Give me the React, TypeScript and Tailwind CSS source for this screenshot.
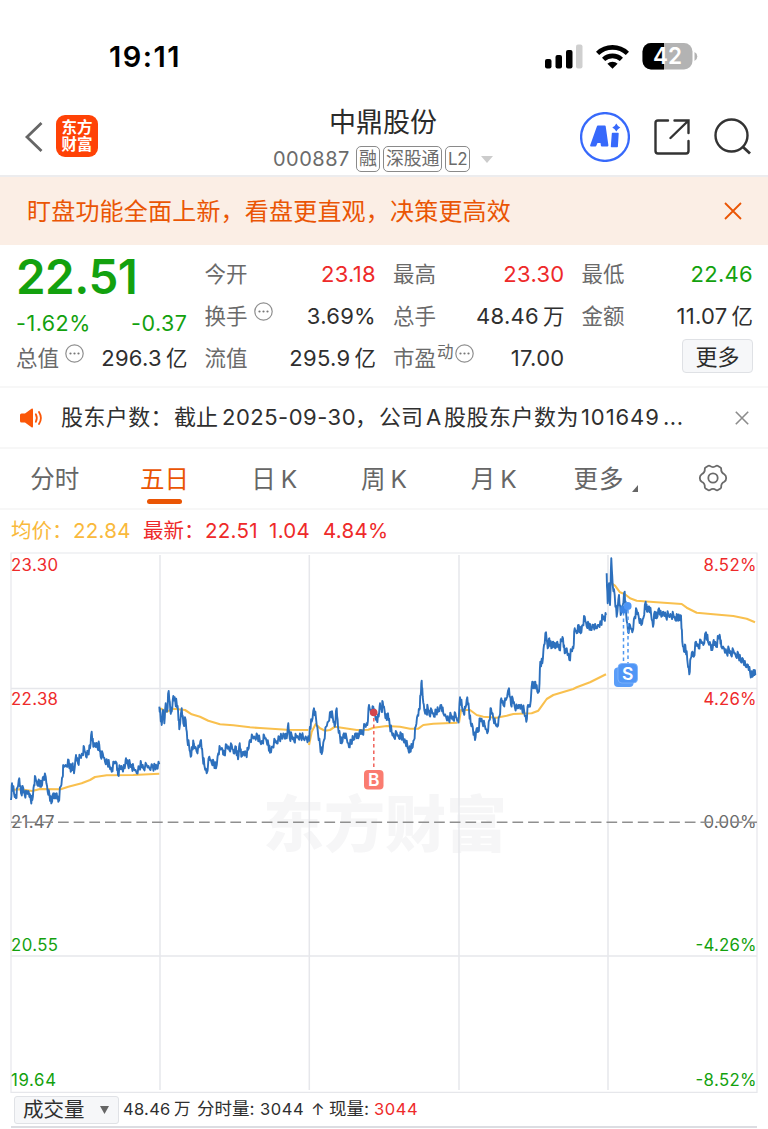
import type { ReactNode } from 'react';

type Point = [number, number];

interface Series {
  // origin of the sample block; samples are stored in 1/3 px steps
  origin: Point;
  points: string;
}

const PRICE: Series[] = [
  {
    origin: [0, 660],
    points:
      '33,420 36,370 42,400 48,415 52,385 58,355 63,400 70,385 74,405 80,400 86,395 92,418 97,420 102,375 106,350 112,375 118,362 124,380 130,350 137,350 143,395 148,400 154,430 160,400 166,415 170,400 175,425 182,380 188,350 190,315 200,320 206,300 212,335 218,310 222,340 228,285 234,310 240,290 248,285 252,260 258,290 264,275 270,265 275,215 280,260 285,250 292,260 298,255 302,290 308,280 315,305 322,305 328,315 335,335 342,305 350,310 354,345 360,320 366,325 374,325 378,295 384,315 390,310 396,325 400,320 410,340 418,320 424,312 430,325 440,315 448,325 458,318 465,325 470,318 478,313',
  },
  {
    origin: [0, 660],
    points:
      '478,140 481,160 485,195 489,150 493,190 497,130 501,155 506,93 511,150 515,155 520,108 526,125 530,130 534,150 538,208 545,145 550,190 557,180 562,240 567,255 572,290 577,260 581,250 590,275 597,262 603,240 608,290 613,315 620,340 628,290 635,310 641,305 648,325 655,280 660,262 668,270 672,285 680,255 688,270 695,255 701,280 708,260 714,298 719,250 724,290 730,275 738,285 744,270 750,240 758,230 765,235 772,225 780,245 788,250 792,225 800,245 805,250 810,278 818,260 825,240 830,250 838,230 845,235 852,222 860,235 865,190 869,235 875,225 883,245 888,225 895,235 902,225 910,235 920,235 927,240',
  },
  {
    origin: [250, 660],
    points:
      '177,245 180,200 185,185 192,145 198,175 204,220 210,255 215,282 222,240 228,200 235,185 242,155 248,170 254,200 260,145 264,200 270,230 275,250 282,220 290,235 297,262 303,240 310,240 318,220 325,235 330,210 337,222 345,195 352,195 357,135 363,160 370,140 376,170 380,180 386,170 390,130 395,155 398,125 404,155 410,180 414,160 419,195 425,215 432,232 440,218 447,235 453,220 460,240 466,245 472,255 476,275 480,262 486,265 492,240 497,200 503,165 508,150 512,105 515,62 518,110 523,150 530,160 533,140 538,165 545,150 552,170 558,150 565,155 574,135 580,160 588,170 596,180 603,165 610,180 616,160 622,185',
  },
  {
    origin: [250, 660],
    points:
      '625,190 630,112 636,140 641,160 646,145 652,112 657,150 662,190 668,200 675,240 680,205 685,215 690,175 697,185 704,195 712,220 718,180 723,145 730,175 736,190 742,200 748,170 754,115 760,135 768,120 777,85 783,135 788,115 794,140 802,145 808,135 816,145 822,150 829,185 834,135 840,140 847,65 852,85 856,65 862,95 867,95 871,5 877,10 882,-45 888,-83 893,-35 898,-65 904,-35 910,-55 916,-35 922,-55 928,-30 934,-60 939,-65 944,-20 950,-35 958,0 964,-30 970,-35 974,-95 980,-80 986,-105 992,-80 998,-105 1004,-130 1010,-100 1016,-110 1022,-90 1030,-105 1038,-95 1046,-105 1053,-110 1058,-130 1063,-123 1068,-135',
  },
  {
    origin: [500, 545],
    points:
      '320,85 323,175 327,115 330,180 334,40 338,120 344,150 350,215 357,150 362,210 368,180 374,140 378,200 384,262 390,240 397,262 404,215 410,195 416,215 424,240 430,220 437,170 441,200 448,185 453,205 459,245 464,200 470,220 477,190 484,215 490,200 498,215 505,208 514,215 520,208 526,225 532,210 538,225 543,212 547,290 552,320 556,300 562,345 568,388 572,340 577,320 581,335 588,290 596,310 602,285 610,300 618,262 624,290 632,300 637,315 641,285 648,305 656,275 660,275 664,305 672,310 680,325 687,312 693,330 700,315 708,335 715,325 722,350 729,342 737,365 744,360 750,380 757,395 762,375 766,390',
  },
];

const AVERAGE: Series[] = [
  {
    origin: [0, 660],
    points:
      '33,390 60,388 97,393 120,387 182,388 205,380 245,370 270,360 285,351 320,346 400,345 478,341',
  },
  {
    origin: [0, 660],
    points:
      '480,145 500,155 520,146 555,150 575,163 600,170 625,182 660,193 700,196 750,202 780,204 860,209 925,210',
  },
  {
    origin: [250, 660],
    points:
      '177,255 185,215 197,192 210,205 225,212 240,210 255,200 275,203 320,210 355,209 370,203 410,198 450,200 480,206 505,206 520,195 550,191 622,188',
  },
  {
    origin: [250, 660],
    points:
      '627,188 633,150 660,150 680,165 700,170 740,173 770,167 790,162 845,160 865,152 870,145 890,117 910,105 970,87 980,82 1020,67 1068,43',
  },
  {
    origin: [500, 545],
    points:
      '330,112 345,122 360,142 375,148 390,160 410,167 470,172 545,177 560,188 590,203 640,208 700,213 740,221 765,232',
  },
];

function parse({ origin, points }: Series): Point[] {
  return points.split(' ').map((p) => {
    const [x, y] = p.split(',').map(Number);
    return [origin[0] + x / 3, origin[1] + y / 3];
  });
}

function smoothPath(series: Series) {
  return parse(series)
    .map(([x, y], i) => `${i ? 'L' : 'M'}${x.toFixed(1)} ${y.toFixed(1)}`)
    .join('');
}

function tickPath(series: Series) {
  const pts = parse(series);
  let d = `M${pts[0][0]} ${pts[0][1]}`;
  for (let i = 1; i < pts.length; i++) {
    const [x0, y0] = pts[i - 1];
    const [x1, y1] = pts[i];
    const wobble = 1.2 + ((i * 7) % 5) * 0.7;
    d += `L${(x0 + (x1 - x0) * 0.36).toFixed(1)} ${(y0 + (y1 - y0) * 0.36 + wobble).toFixed(1)}`;
    d += `L${(x0 + (x1 - x0) * 0.68).toFixed(1)} ${(y0 + (y1 - y0) * 0.68 - wobble).toFixed(1)}`;
    d += `L${x1.toFixed(1)} ${y1.toFixed(1)}`;
  }
  return d;
}

function StatusBar() {
  return (
    <div className="flex h-[100px] items-start pt-[41px]">
      <div className="ml-[109px] w-[436px] text-[29px] leading-8 font-semibold tracking-[1.5px] text-black">
        19:11
      </div>
      <svg width="40" height="26" viewBox="0 0 40 26" className="mt-[3px]">
        <rect x="0" y="15" width="6.5" height="9.5" rx="2" />
        <rect x="10.5" y="11" width="6.5" height="13.5" rx="2" />
        <rect x="21" y="6" width="6.5" height="18.5" rx="2" />
        <rect x="31" y="0.5" width="6.5" height="24" rx="2" fill="#cfcfcf" />
      </svg>
      <svg width="35" height="26" viewBox="0 0 35 26" className="mt-[3px] ml-[10px]">
        <g fill="none" stroke="#000" strokeWidth="4.6">
          <path d="M2.6 9.4a21.5 21.5 0 0 1 29.8 0" />
          <path d="M8.6 15.4a13 13 0 0 1 17.8 0" />
        </g>
        <path d="M17.5 24.8l-5.1-5.1a7.4 7.4 0 0 1 10.2 0z" />
      </svg>
      <svg width="56" height="28" viewBox="0 0 56 28" className="mt-[1px] ml-[12px]">
        <defs>
          <clipPath id="battery">
            <rect x="0.5" y="1" width="50" height="26.5" rx="8.5" />
          </clipPath>
        </defs>
        <g clipPath="url(#battery)">
          <rect width="51" height="28" fill="#b3b3b3" />
          <rect width="22" height="28" fill="#000" />
        </g>
        <path d="M52.5 10a5 5 0 0 1 0 9z" fill="#b3b3b3" />
        <text x="11" y="22.3" fontSize="22.5" fontWeight="600" fill="#fff" textLength="29" className="font-[Inter]">
          42
        </text>
      </svg>
    </div>
  );
}

function Tag({ children }: { children: ReactNode }) {
  return (
    <span className="flex h-[26px] shrink-0 items-center rounded-[5px] border-[1.5px] border-[#8a8a8a] px-[2px] text-[18px] leading-none whitespace-nowrap">
      {children}
    </span>
  );
}

function Header() {
  return (
    <div className="flex h-[77px] items-start border-b-2 border-[#ececee]">
      <svg width="20" height="32" viewBox="0 0 20 32" className="mt-[21px] ml-[24px]">
        <path d="M17.5 2L3 16l14.500 14" fill="none" stroke="#666" strokeWidth="2.8" />
      </svg>
      <div className="mt-[15px] ml-[12px] flex h-[42px] w-[42px] flex-col items-center justify-center rounded-[9px] bg-[#ff4206] text-[15.5px] leading-[17.500px] font-bold text-white">
        <span>东方</span>
        <span>财富</span>
      </div>
      <div className="ml-[175px] w-[219px]">
        <div className="mt-[6px] pl-[56px] text-[27px] leading-[34px] text-[#2b2b2b]">中鼎股份</div>
        <div className="mt-[6px] flex items-center gap-[3px] text-[#6b6b6b]">
          <span className="w-[80px] shrink-0 text-[20px] leading-[26px] tracking-[0.5px]">000887</span>
          <Tag>融</Tag>
          <Tag>
            <span className="tracking-[-0.3px]">深股通</span>
          </Tag>
          <Tag>
            <span className="text-[17px] tracking-[-0.5px]">L2</span>
          </Tag>
          <svg width="12" height="7" viewBox="0 0 12 7" className="ml-[8px] shrink-0">
            <path d="M0 0h12L6 7z" fill="#ccc" />
          </svg>
        </div>
      </div>
      <svg width="50" height="50" viewBox="0 0 50 50" className="mt-[12px] ml-[88px]">
        <circle cx="25" cy="25" r="23.9" fill="none" stroke="#3769fb" strokeWidth="2.300" />
        <path
          d="M11 33.500L17.800 14.500H24.800L27.500 33.500H21.800L21.300 30H17L15.500 33.500z M18.700 25.800H20.800L20.300 21.300z"
          fill="#3769fb"
          fillRule="evenodd"
          stroke="#3769fb"
          strokeWidth="1.800"
          strokeLinejoin="round"
        />
        <path d="M32.500 21.500h5.500l-.8 13h-5.700z" fill="#3769fb" stroke="#3769fb" strokeWidth="1.400" strokeLinejoin="round" />
        <path d="M36.300 11.500q1.300 2.800 4 4-2.700 1.300-4 4-1.300-2.700-4-4 2.700-1.200 4-4z" fill="#3769fb" />
      </svg>
      <svg width="36" height="38" viewBox="0 0 36 38" className="mt-[18px] ml-[24px]">
        <g fill="none" stroke="#333" strokeWidth="2.400" strokeLinecap="round">
          <path d="M14 2.500H4Q1.500 2.500 1.500 5V33Q1.500 35.500 4 35.500H32Q34.500 35.500 34.500 33V23" />
          <path d="M20.500 2.500H34.500V15M34.500 2.500L16.500 20" />
        </g>
      </svg>
      <svg width="38" height="38" viewBox="0 0 38 38" className="mt-[18px] ml-[24px]">
        <circle cx="17.500" cy="17.500" r="16" fill="none" stroke="#333" strokeWidth="2.400" />
        <path d="M29 29l7 6.500" stroke="#333" strokeWidth="2.800" />
      </svg>
    </div>
  );
}

function Banner() {
  return (
    <div className="flex h-[68px] items-center justify-between bg-[#fbeee5] pr-[26px] pl-[27px]">
      <span className="pt-[2px] text-[24px] tracking-[0.2px] text-[#ea5504]">
        盯盘功能全面上新，看盘更直观，决策更高效
      </span>
      <svg width="18" height="18" viewBox="0 0 18 18">
        <path d="M1 1l16 16M17 1L1 17" stroke="#ea5504" strokeWidth="1.800" />
      </svg>
    </div>
  );
}

function MoreDots() {
  return (
    <svg width="19" height="19" viewBox="0 0 19 19" className="mb-[9px] shrink-0">
      <circle cx="9.500" cy="9.500" r="8.700" fill="none" stroke="#8f8f8f" strokeWidth="1.200" />
      <g fill="#777">
        <circle cx="5.500" cy="9.500" r="1.100" />
        <circle cx="9.500" cy="9.500" r="1.100" />
        <circle cx="13.500" cy="9.500" r="1.100" />
      </g>
    </svg>
  );
}

interface StatProps {
  label: string;
  value: string;
  unit?: string;
  sup?: string;
  info?: boolean;
  color?: string;
}

function Stat({ label, value, unit, sup, info, color = 'text-[#2f2f2f]' }: StatProps) {
  return (
    <div className="flex h-[42px] items-center justify-between">
      <div className="flex items-center text-[21.5px] text-[#6a6a6a]">
        {label}
        {sup && <span className="mb-[12px] ml-px text-[16.5px] leading-none">{sup}</span>}
        {info && <span className={sup ? 'ml-px' : 'ml-[6px]'}><MoreDots /></span>}
      </div>
      <div className={`flex items-center gap-[4px] text-[21.5px] ${color}`}>
        <span className="text-[22px] tracking-[0.3px]">{value}</span>
        {unit && <span>{unit}</span>}
      </div>
    </div>
  );
}

function Quote() {
  return (
    <div className="grid h-[143px] grid-cols-4 gap-x-[17px] border-b-2 border-[#f7f7f7] pt-[8px] pr-[15px] pl-[16px]">
      <div>
        <div className="h-[48px] text-[47.5px] leading-[48px] font-semibold tracking-[-0.5px] text-[#13a10e]">
          22.51
        </div>
        <div className="flex h-[36px] items-center justify-between pt-[8px] text-[21.5px] tracking-[0.5px] text-[#13a10e]">
          <span>-1.62%</span>
          <span>-0.37</span>
        </div>
        <Stat label="总值" value="296.3" unit="亿" info />
      </div>
      <div>
        <Stat label="今开" value="23.18" color="text-[#ee2a2a]" />
        <Stat label="换手" value="3.69%" info />
        <Stat label="流值" value="295.9" unit="亿" />
      </div>
      <div>
        <Stat label="最高" value="23.30" color="text-[#ee2a2a]" />
        <Stat label="总手" value="48.46" unit="万" />
        <Stat label="市盈" value="17.00" sup="动" info />
      </div>
      <div>
        <Stat label="最低" value="22.46" color="text-[#13a10e]" />
        <Stat label="金额" value="11.07" unit="亿" />
        <button className="mt-[2px] ml-auto flex h-[34px] w-[71px] items-center justify-center rounded-[4px] border border-[#dfe1e5] bg-[#f6f7f9] pt-px text-[22px] leading-none text-[#2b2b2b]">
          更多
        </button>
      </div>
    </div>
  );
}

function Notice() {
  return (
    <div className="flex h-[61px] items-center border-b-2 border-[#f7f7f7] text-[22px] text-[#2f2f2f]">
      <svg width="24" height="20" viewBox="0 0 24 20" className="ml-[19px]">
        <path d="M1 7q0-1.500 1.500-1.500H6L12.500.8Q14 0 14 1.800V18.200Q14 20 12.500 19.200L6 14.500H2.500Q1 14.500 1 13z" fill="#fb5708" />
        <g fill="none" stroke="#fb5708" strokeWidth="1.800" strokeLinecap="round">
          <path d="M16.800 6.200q2 3.800 0 7.600" />
          <path d="M20 4q3.800 6 0 12" />
        </g>
      </svg>
      <div className="ml-[18px] flex whitespace-nowrap">
        <span className="w-[113px] tracking-[0.400px]">股东户数：</span>
        <span className="w-[48px]">截止</span>
        <span className="w-[133px] tracking-[0.500px]">2025-09-30</span>
        <span className="w-[24px]">，</span>
        <span className="w-[47px]">公司</span>
        <span className="w-[18px]">A</span>
        <span className="w-[137px] tracking-[0.500px]">股股东户数为</span>
        <span className="w-[82px] tracking-[0.900px]">101649</span>
        <span className="tracking-[0.500px]">...</span>
      </div>
      <svg width="14" height="14" viewBox="0 0 14 14" className="mr-[19px] ml-auto">
        <path d="M.8.8l12.400 12.400M13.200.8L.8 13.200" stroke="#8c8c8c" strokeWidth="1.600" />
      </svg>
    </div>
  );
}

function Tabs() {
  const tabs = ['分时', '五日', '日 K', '周 K', '月 K'];
  return (
    <div className="grid h-[61px] grid-cols-7 border-b-2 border-[#f7f7f7] text-[24.5px] text-[#666]">
      {tabs.map((tab) => {
        const active = tab === '五日';
        return (
          <div
            key={tab}
            className={`flex flex-col items-center ${active ? 'text-[#ea5504]' : ''}`}
          >
            <span className="mt-[12px] leading-[36px] [word-spacing:-2px]">{tab}</span>
            {active && <span className="mt-[2px] h-[5px] w-[35px] rounded-full bg-[#ea5504]" />}
          </div>
        );
      })}
      <div className="flex justify-center pl-[5px]">
        <span className="mt-[12px] leading-[36px] tracking-[1px]">更多</span>
        <svg width="6" height="7" viewBox="0 0 6 7" className="mt-[36px] ml-[8px]">
          <path d="M6 0v7H0z" fill="#666" />
        </svg>
      </div>
      <div className="flex justify-center">
        <svg width="30" height="30" viewBox="0 0 30 30" className="mt-[14px]">
          <g fill="none" stroke="#6a6a6a" strokeWidth="1.800" strokeLinejoin="round">
            <path d="M10.500 2.800Q11.300 2.400 12 3.100Q15 5.100 18 3.100Q18.700 2.400 19.500 2.800L22.500 4.600Q23.400 5.100 23.200 6Q22.900 9.500 26.300 11.200Q28.200 12.500 28.200 15Q28.200 17.500 26.300 18.800Q22.900 20.500 23.200 24Q23.400 24.900 22.500 25.400L19.500 27.200Q18.700 27.600 18 26.900Q15 24.900 12 26.900Q11.300 27.600 10.500 27.200L7.500 25.400Q6.600 24.900 6.800 24Q7.100 20.500 3.700 18.800Q1.800 17.500 1.800 15Q1.800 12.500 3.700 11.200Q7.100 9.500 6.800 6Q6.600 5.100 7.500 4.600z" />
            <circle cx="15" cy="15" r="4.700" />
          </g>
        </svg>
      </div>
    </div>
  );
}

function Legend() {
  return (
    <div className="flex h-[42px] items-center pt-px pl-[11px] text-[20.5px] whitespace-nowrap text-[#ee2a2a]">
      <span className="w-[62px] text-[#f9b93c]">均价：</span>
      <span className="w-[70px] tracking-[0.300px] text-[#f9b93c]">22.84</span>
      <span className="w-[62px]">最新：</span>
      <span className="w-[64px] tracking-[0.300px]">22.51</span>
      <span className="w-[54px] tracking-[0.300px]">1.04</span>
      <span className="tracking-[0.300px]">4.84%</span>
    </div>
  );
}

const LABELS: { y: number; left: string; right: string; w: number; rw: number; fill: string }[] = [
  { y: 570.5, left: '23.30', right: '8.52%', w: 47, rw: 53, fill: '#ee2a2a' },
  { y: 704.5, left: '22.38', right: '4.26%', w: 47, rw: 53, fill: '#ee2a2a' },
  { y: 828, left: '21.47', right: '0.00%', w: 43.5, rw: 53, fill: '#6a6a6a' },
  { y: 951, left: '20.55', right: '-4.26%', w: 47, rw: 61, fill: '#13a10e' },
  { y: 1086, left: '19.64', right: '-8.52%', w: 45, rw: 61, fill: '#13a10e' },
];

function Chart() {
  return (
    <svg width="768" height="541" viewBox="0 552 768 541" className="block font-[Inter]">
      <text
        x="263"
        y="847"
        fontSize="61"
        fontWeight="900"
        fill="#f6f6f7"
        textLength="244"
        className="font-['Noto_Sans_CJK_SC']"
      >
        东方财富
      </text>
      <g stroke="#e6e7eb" strokeWidth="1.500" fill="none">
        <path d="M11 553H757V1092.300H11z" strokeWidth="1.200" />
        <path d="M11 688.500H757M11 956H757" />
        <path d="M160 555V1090M309.300 555V1090M459 555V1090M608 555V1090" />
      </g>

      {AVERAGE.map((s, i) => (
        <path key={i} d={smoothPath(s)} fill="none" stroke="#f9c04e" strokeWidth="2.100" strokeLinejoin="round" />
      ))}
      {PRICE.map((s, i) => (
        <path key={i} d={tickPath(s)} fill="none" stroke="#2d70bd" strokeWidth="1.900" strokeLinejoin="round" />
      ))}

      {/* buy marker */}
      <path d="M373.800 718V770" stroke="#f0625a" strokeWidth="1.500" strokeDasharray="3.500 3" />
      <circle cx="373.700" cy="712.500" r="3.800" fill="#d5454c" />
      <rect x="364" y="770" width="19.500" height="19.500" rx="4" fill="#fa7c70" />
      <text x="373.800" y="786" fontSize="17.500" fontWeight="600" fill="#fff" textAnchor="middle">
        B
      </text>

      {/* sell markers */}
      <path d="M623.500 612V664M628 610V664" stroke="#4f97f0" strokeWidth="1.500" strokeDasharray="3.500 3" />
      <circle cx="623.800" cy="609.500" r="3.900" fill="#3a84e4" />
      <circle cx="627.700" cy="606" r="3.900" fill="#4d95f5" />
      <rect x="614" y="667.500" width="19.500" height="19.500" rx="4" fill="#5a9df8" />
      <rect x="618" y="663.500" width="19.500" height="19.500" rx="4" fill="#5096f6" stroke="#7fb4fb" strokeWidth="0.800" />
      <text x="627.700" y="679.500" fontSize="17.500" fontWeight="600" fill="#fff" textAnchor="middle">
        S
      </text>

      {LABELS.map((l) => (
        <g key={l.y} fontSize="16.800" fill={l.fill}>
          <text x="11" y={l.y} textLength={l.w}>
            {l.left}
          </text>
          <text x={756.5 - l.rw} y={l.y} textLength={l.rw}>
            {l.right}
          </text>
        </g>
      ))}
      <path d="M11 822.300H757" stroke="#8f8f8f" strokeWidth="1.500" strokeDasharray="10.700 4.970" />
    </svg>
  );
}

function VolumeBar() {
  return (
    <div className="mx-[11px] flex h-[35px] items-center border-b-2 border-[#dcdde2] pl-[3px] text-[16.5px] whitespace-nowrap text-[#2f2f2f]">
      <button className="flex h-[28px] w-[105px] items-center justify-between rounded-[3px] border border-[#e0e2e6] bg-[#f6f7f9] pt-px pr-[9px] pl-[8px] text-[20.5px] leading-none">
        成交量
        <svg width="9" height="8" viewBox="0 0 9 8">
          <path d="M0 0h9L4.500 8z" fill="#666" />
        </svg>
      </button>
      <span className="ml-[4px] w-[51px] tracking-[0.300px]">48.46</span>
      <span className="w-[23px]">万</span>
      <span className="w-[63px] text-[17.500px]">分时量:</span>
      <span className="w-[51px] tracking-[0.600px]">3044</span>
      <span className="w-[18px]">↑</span>
      <span className="w-[45px] text-[17.500px]">现量:</span>
      <span className="tracking-[0.600px] text-[#ee2a2a]">3044</span>
    </div>
  );
}

export default function App() {
  return (
    <div className="h-[1129px] w-[768px] overflow-hidden bg-white font-[Inter,'Noto_Sans_CJK_SC',sans-serif]">
      <StatusBar />
      <Header />
      <Banner />
      <Quote />
      <Notice />
      <Tabs />
      <Legend />
      <Chart />
      <VolumeBar />
    </div>
  );
}
